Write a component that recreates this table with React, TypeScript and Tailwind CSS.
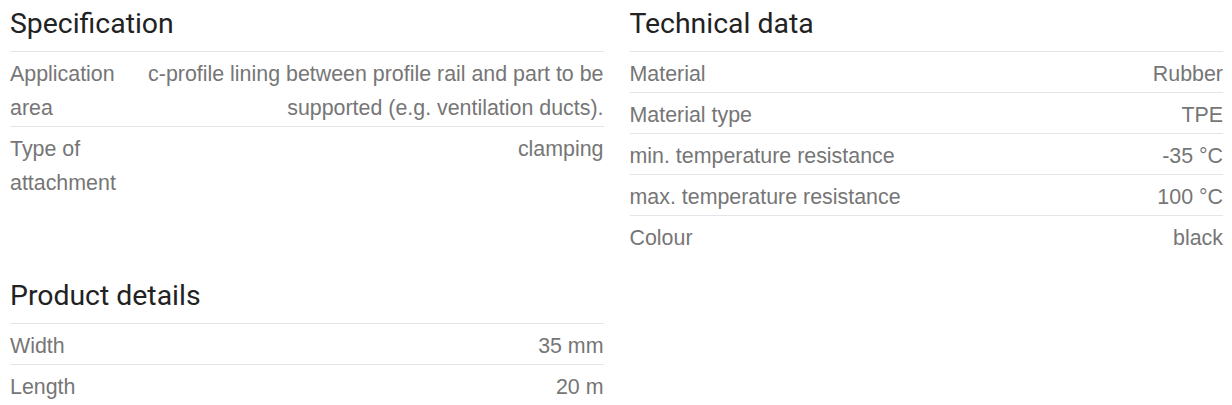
import React from "react";

type Row = [string, string];

const spec: Row[] = [
  ["Application area", "c-profile lining between profile rail and part to be supported (e.g. ventilation ducts)."],
  ["Type of attachment", "clamping"],
];

const tech: Row[] = [
  ["Material", "Rubber"],
  ["Material type", "TPE"],
  ["min. temperature resistance", "-35 °C"],
  ["max. temperature resistance", "100 °C"],
  ["Colour", "black"],
];

const details: Row[] = [
  ["Width", "35 mm"],
  ["Length", "20 m"],
];

function Section({ title, rows, labelClass }: { title: string; rows: Row[]; labelClass: string }) {
  return (
    <section>
      <h2 className="font-['Roboto',sans-serif] text-[28.4px] leading-[1.2] text-[#222222] pt-[7px] pb-[10px] font-normal">
        {title}
      </h2>
      <div>
        {rows.map(([k, v]) => (
          <div key={k} className="flex border-t border-[#e3e5e9] pt-[5px] pb-[1px]">
            <div className={labelClass}>{k}</div>
            <div className="flex-1 text-right">{v}</div>
          </div>
        ))}
      </div>
    </section>
  );
}

export default function App() {
  return (
    <div className="bg-white w-[1232px] h-[405px] overflow-hidden font-['Liberation_Sans',Arial,sans-serif] text-[21.4px] leading-[34px] text-[#767676]">
      <div className="grid grid-cols-2 gap-x-[26px] gap-y-[16px] pl-[10px] pr-[9px] items-start">
        <Section title="Specification" rows={spec} labelClass="w-[128px] shrink-0 pr-[6px]" />
        <Section title="Technical data" rows={tech} labelClass="shrink-0 pr-[12px]" />
        <Section title="Product details" rows={details} labelClass="shrink-0 pr-[12px]" />
      </div>
    </div>
  );
}
